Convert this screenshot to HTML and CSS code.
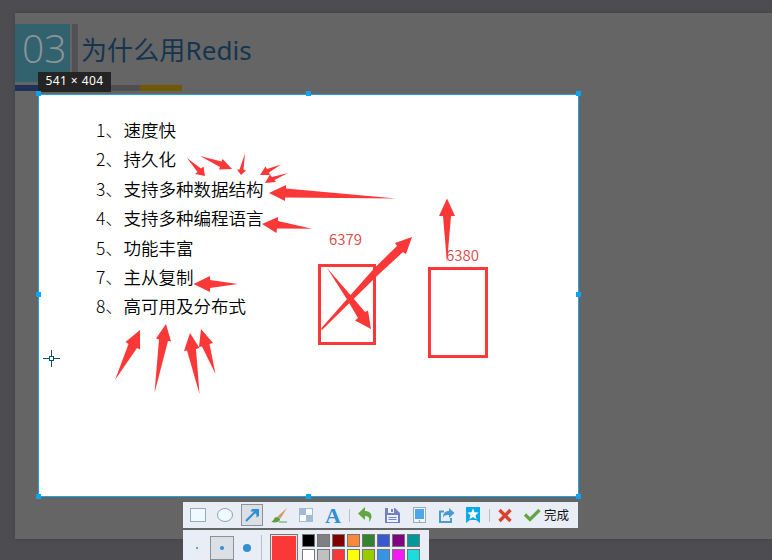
FILE: index.html
```html
<!DOCTYPE html>
<html lang="zh-CN">
<head>
<meta charset="utf-8">
<title>为什么用Redis</title>
<link rel="stylesheet" href="styles.css">
</head>
<body>
<div class="desktop">
  <section class="slide">
    <header class="slide-head">
      <span class="number">03</span>
      <span class="divider"></span>
      <h1>为什么用Redis</h1>
    </header>
    <div class="stripe"><i class="blue"></i><i class="brown"></i><i class="gray"></i><i class="gold"></i></div>
  </section>

  <main class="selection">
    <ul class="reasons">
      <li><b>1、</b>速度快</li>
      <li><b>2、</b>持久化</li>
      <li><b>3、</b>支持多种数据结构</li>
      <li><b>4、</b>支持多种编程语言</li>
      <li><b>5、</b>功能丰富</li>
      <li><b>7、</b>主从复制</li>
      <li><b>8、</b>高可用及分布式</li>
    </ul>
  </main>
  <div class="size-tip">541 × 404</div>

  <svg class="markup" width="772" height="560" viewBox="0 0 772 560">
    <rect x="38.500" y="94.500" width="540" height="402" fill="none" stroke="#1aa5e8"/>
    <g fill="#08a5f4">
      <rect x="36" y="91" width="5" height="5"/><rect x="306" y="91" width="5" height="5"/><rect x="576" y="91" width="5" height="5"/>
      <rect x="36" y="292" width="5" height="5"/><rect x="576" y="292" width="5" height="5"/>
      <rect x="36" y="494" width="5" height="5"/><rect x="306" y="494" width="5" height="5"/><rect x="576" y="494" width="5" height="5"/>
    </g>
    <g class="label"><text x="329" y="245">6379</text><text x="446" y="261">6380</text></g>
    <g fill="none" stroke="#fb3838" stroke-width="3">
      <rect x="319.5" y="265.5" width="55" height="78"/>
      <rect x="429.5" y="268.5" width="57" height="88"/>
    </g>
    <g fill="#fb3838">
      <polygon points="187,158 201,168.500 203.5,166.500 205,176 195,174 197.500,172"/>
      <polygon points="200,156 221.500,161.500 222.700,159 232,169 219,169.500 220,167"/>
      <polygon points="245,153.500 243.500,169.500 246,170.500 241,175 237,169.500 239.500,169.500"/>
      <polygon points="281,164.500 267,169 265.500,166.500 260,175 270,175 269,172.500"/>
      <polygon points="288,173 272,177 270,174.500 265,183 276,182 274.500,180"/>
      <polygon points="396,198.500 286,188.500 286,185 269,193 285,201 285,197.500"/>
      <polygon points="312,228.800 278,221 278,217 262,224 276.500,233 277,228.500"/>
      <polygon points="238,284 210,280 210,276 193.500,284 210,292 210,288"/>
      <polygon points="321,328.500 374,268.500 397,246 395,243 412,237 406,254 403,252 378,275 322,330"/>
      <polygon points="327,268 354,299 365,312 368,310.500 371,329 355,320.500 358,318 348,301"/>
      <polygon points="447,263 443,216 439,216 447,198.500 455,216 451,216"/>
      <polygon points="115,380 128.500,344 125.500,342 140,330 140,349.500 137,348"/>
      <polygon points="154.500,393 159,339.500 156,338.500 166,324 171,341.500 168,341"/>
      <polygon points="199.500,394 187,350.500 184,351 190,333 199.500,348 196,349"/>
      <polygon points="215.500,374 202,346.500 199,347 201,329 213,343 209.500,344"/>
    </g>
    <g fill="none" stroke="#0b5070"><path d="M51.500 350v6M51.500 361v6M43 358.500h6M54 358.500h6"/><rect x="49.500" y="356.500" width="4" height="4"/></g>
  </svg>

  <div class="tools">
    <div class="bar">
      <span class="tool"><svg viewBox="0 0 22 22"><rect x="3.500" y="4.500" width="15" height="13" fill="#f0f9ff" stroke="#91aec4"/></svg></span>
      <span class="tool"><svg viewBox="0 0 22 22"><ellipse cx="11" cy="11" rx="7.500" ry="6.500" fill="#f0f9ff" stroke="#8ba3bc"/></svg></span>
      <span class="tool picked"><svg viewBox="0 0 22 22"><path d="M5 17L15 7" stroke="#318fd2" stroke-width="2.200"/><path d="M9.500 7.500L11 5h7v7l-2.500 1.500v-3l-3-3z" fill="#318fd2"/></svg></span>
      <span class="tool"><svg viewBox="0 0 22 22"><path d="M19 4L9.500 12.500l3 2z" fill="#d49a6a"/><path d="M8.500 13q3.500 0 3.500 3c-2 3-6 2.500-9 2 3-1 3-5 5.500-5z" fill="#5d9f43"/><path d="M11 18h8" stroke="#5d9f43"/></svg></span>
      <span class="tool"><svg viewBox="0 0 22 22"><rect x="4" y="4" width="14" height="14" fill="#a2bad4"/><path d="M11 5h6v6h-6zM5 11h6v6H5z" fill="#f8fbff"/></svg></span>
      <span class="tool letter">A</span>
      <i class="sep"></i>
      <span class="tool"><svg viewBox="0 0 22 22"><path d="M4 9.500L11 3v4c6 0 9 5 4 11.500 1-4.500 0-6.500-4-6.500v4z" fill="#62a744"/></svg></span>
      <span class="tool"><svg viewBox="0 0 22 22"><path d="M4 4h10l5 5v10H4z" fill="#7482c5"/><path d="M7 4h6v5H7zM6 11h11v7H6z" fill="#edf2fc"/><path d="M10 5h2v3h-2z" fill="#7482c5"/><path d="M7.500 13.500h8M7.500 15.500h8" stroke="#7482c5"/></svg></span>
      <span class="tool"><svg viewBox="0 0 22 22"><rect x="5.500" y="3.500" width="12" height="15" fill="#f1f5fa" stroke="#9faab7"/><rect x="7" y="5" width="9" height="10" fill="#4ca7ec"/><circle cx="11.500" cy="17" r=".7" fill="#65798b"/></svg></span>
      <span class="tool"><svg viewBox="0 0 22 22"><path d="M9 7.500H5V18h11v-4" fill="none" stroke="#4a9bd4" stroke-width="2"/><path d="M8 14c0-5 2-7 6-7V4l5.500 5-5.500 5v-3c-3 0-5 0-6 3z" fill="#4a9bd4"/></svg></span>
      <span class="tool"><svg viewBox="0 0 22 22"><path d="M4 3h14v16l-4-3h-6l-4 3z" fill="#09a9ec"/><path d="M11 4.500l1.600 3.700 4 .3-3 2.700.9 4-3.500-2.100-3.500 2.100.9-4-3-2.700 4-.3z" fill="#fff"/></svg></span>
      <i class="sep"></i>
      <span class="tool"><svg viewBox="0 0 22 22"><path d="M5.500 6l11 11M16.500 6l-11 11" stroke="#d9432f" stroke-width="3.400"/></svg></span>
      <span class="done"><svg viewBox="0 0 18 16"><path d="M2 7.500l5 5L16.500 3" fill="none" stroke="#62a744" stroke-width="3.200"/></svg>完成</span>
    </div>
    <div class="bar options">
      <div class="sizes"><span class="s"></span><span class="m"></span><span class="l"></span></div>
      <i class="line"></i>
      <span class="current"></span>
      <div class="palette">
        <i class="c1"></i><i class="c2"></i><i class="c3"></i><i class="c4"></i><i class="c5"></i><i class="c6"></i><i class="c7"></i><i class="c8"></i>
        <i class="d1"></i><i class="d2"></i><i class="d3"></i><i class="d4"></i><i class="d5"></i><i class="d6"></i><i class="d7"></i><i class="d8"></i>
      </div>
    </div>
  </div>
</div>
</body>
</html>
```
FILE: styles.css
```css
* { box-sizing: border-box; }
body { margin: 0; font-family: "Noto Sans", "Noto Sans CJK SC", sans-serif; }
.desktop { position: relative; width: 772px; height: 560px; padding: 13px 0 0 15px; overflow: hidden; background: #4d4d51; }
.slide { height: 526px; padding-top: 11px; background: #656565; box-shadow: 0 0 5px #424246; }
.slide-head { display: flex; height: 58px; }
.number { width: 55px; height: 58px; padding-left: 7px; background: #33626f; color: #8b9498; font: 300 39px/48px "Open Sans", "Noto Sans", sans-serif; }
.divider { width: 6px; margin-left: 2px; background: #535154; }
h1 { margin: 0 0 0 3px; color: #14344f; font: 400 26px/53px "Noto Sans", "Noto Sans CJK SC", sans-serif; letter-spacing: .1px; white-space: nowrap; }
.stripe { display: flex; width: 167px; height: 6px; margin-top: 3px; }
.stripe i { flex: 1; }
.blue { background: #1e315a; }
.brown { background: #57301a; }
.gray { background: #514e50; }
.gold { background: #705900; }
.selection { position: absolute; left: 39px; top: 94px; width: 540px; height: 402px; padding: 21px 0 0 57px; background: #fff; }
.reasons { margin: 0; padding: 0; list-style: none; color: #000; font: 350 17.500px/29.400px "Noto Sans CJK SC", sans-serif; }
.reasons li { display: flex; height: 29.400px; white-space: nowrap; }
.reasons b { width: 27.500px; font-weight: 300; }
.size-tip { position: absolute; left: 38px; top: 72px; width: 73px; height: 20px; background: #242424; color: #fff; font: 12px/18px "Noto Sans", sans-serif; letter-spacing: .4px; text-align: center; }
.markup { position: absolute; left: 0; top: 0; }
.label { fill: #d94747; font: 350 15px "Noto Sans CJK SC", sans-serif; }
.tools { position: absolute; left: 183px; top: 502px; }
.bar { display: flex; align-items: center; width: 395px; height: 26px; padding-left: 4px; background: #e9edf5; }
.tool { flex: none; width: 22px; height: 22px; margin-right: 5px; }
.tool svg { display: block; width: 22px; height: 22px; }
.picked { background: #dbe0e7; outline: 1px solid #8c9299; outline-offset: -1px; }
.letter { color: #318fd2; font: bold 22px/24px "Liberation Serif", serif; text-align: center; }
.sep { width: 1px; height: 13px; margin-right: 4px; background: #bbc0c8; }
.done { display: flex; align-items: center; gap: 3px; margin-left: 2px; color: #101318; font: 12.500px/20px "Noto Sans CJK SC", sans-serif; white-space: nowrap; }
.done svg { width: 18px; height: 16px; }
.options { align-items: flex-start; width: 246px; height: 34px; margin-top: 2px; padding: 0; background: #e9edf5; }
.sizes { display: flex; width: 78px; padding: 6px 0 0 2px; }
.sizes span { display: grid; place-items: center; width: 24px; height: 24px; }
.sizes span::before { content: ""; width: 2px; height: 2px; border-radius: 50%; background: #318fd2; }
.sizes .m { margin-left: 1px; border: 1px solid #8c9299; background: #dbe0e7; }
.sizes .m::before { width: 4px; height: 4px; }
.sizes .l { margin-left: 1px; }
.sizes .l::before { width: 8px; height: 8px; }
.line { width: 1px; height: 30px; margin-top: 5px; background: #bbc0c8; }
.current { width: 28px; height: 28px; margin: 4px 0 0 8px; border: 1px solid #777; background: #fb3838; box-shadow: inset 0 0 0 1px #f7dede; }
.palette { display: grid; grid-template-columns: repeat(8, 13px); gap: 2px; margin: 4px 0 0 4px; }
.palette i { width: 13px; height: 13px; border: 1px solid #777; }
.c1 { background: #000; } .c2 { background: #808084; } .c3 { background: #800000; } .c4 { background: #f88840; }
.c5 { background: #308430; } .c6 { background: #3a58d2; } .c7 { background: #800080; } .c8 { background: #009999; }
.d1 { background: #fff; } .d2 { background: #c0c0c0; } .d3 { background: #fb3838; } .d4 { background: #ff0; }
.d5 { background: #99cc00; } .d6 { background: #3794e4; } .d7 { background: #f31bf3; } .d8 { background: #1bdedc; }
```
